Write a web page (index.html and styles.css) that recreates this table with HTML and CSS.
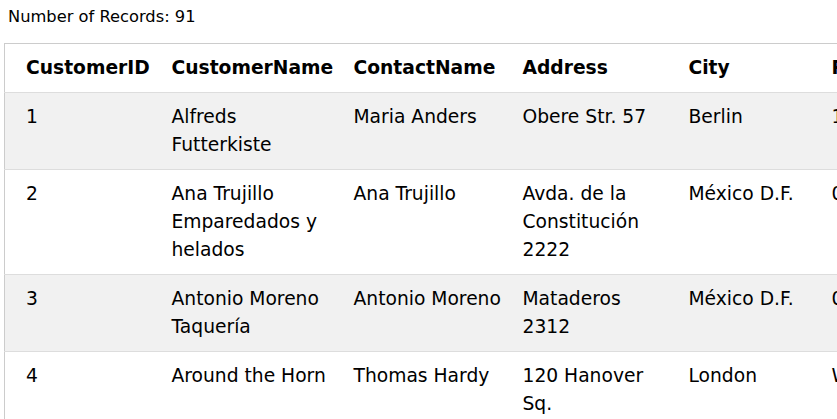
FILE: index.html
```html
<!DOCTYPE html>
<html>
<head>
<meta charset="utf-8">
<link rel="stylesheet" href="styles.css">
</head>
<body>
<div class="count">Number of Records: 91</div>
<div class="wrap">
<table class="data">
<colgroup>
<col class="c1"><col class="c2"><col class="c3"><col class="c4"><col class="c5"><col class="c6">
</colgroup>
<tr class="head"><th>CustomerID</th><th>CustomerName</th><th>ContactName</th><th>Address</th><th>City</th><th>PostalCode</th></tr>
<tr class="odd"><td>1</td><td>Alfreds Futterkiste</td><td>Maria Anders</td><td>Obere Str. 57</td><td>Berlin</td><td>12209</td></tr>
<tr><td>2</td><td>Ana Trujillo Emparedados y helados</td><td>Ana Trujillo</td><td>Avda. de la Constitución 2222</td><td>México D.F.</td><td>05021</td></tr>
<tr class="odd"><td>3</td><td>Antonio Moreno Taquería</td><td>Antonio Moreno</td><td>Mataderos 2312</td><td>México D.F.</td><td>05023</td></tr>
<tr><td>4</td><td>Around the Horn</td><td>Thomas Hardy</td><td>120 Hanover Sq.</td><td>London</td><td>WA1 1DP</td></tr>
</table>
</div>
</body>
</html>
```
FILE: styles.css
```css
html, body {
  margin: 0;
  padding: 0;
  background: #fff;
  color: #000;
  font-family: "DejaVu Sans", Verdana, sans-serif;
  overflow: hidden;
}
body {
  padding: 3px 0 0 4px;
}
.count {
  padding-left: 4px;
  margin-bottom: 12px;
  font-size: 16.3px;
  line-height: 28px;
}
.wrap {
  width: 1100px;
}
.data {
  border-collapse: collapse;
  table-layout: fixed;
  width: 981px;
  border: 1px solid #ccc;
  font-size: 18.7px;
  line-height: 28px;
}
.c1 { width: 159px; }
.c2 { width: 182px; }
.c3 { width: 169px; }
.c4 { width: 166px; }
.c5 { width: 143px; }
.c6 { width: 162px; }
.data th, .data td {
  text-align: left;
  vertical-align: top;
  padding: 10px 8px;
  border-bottom: 1px solid #ddd;
}
.data th:first-child, .data td:first-child {
  padding-left: 21px;
}
.data th {
  font-weight: bold;
}
.data tr.odd {
  background: #f1f1f1;
}
```
